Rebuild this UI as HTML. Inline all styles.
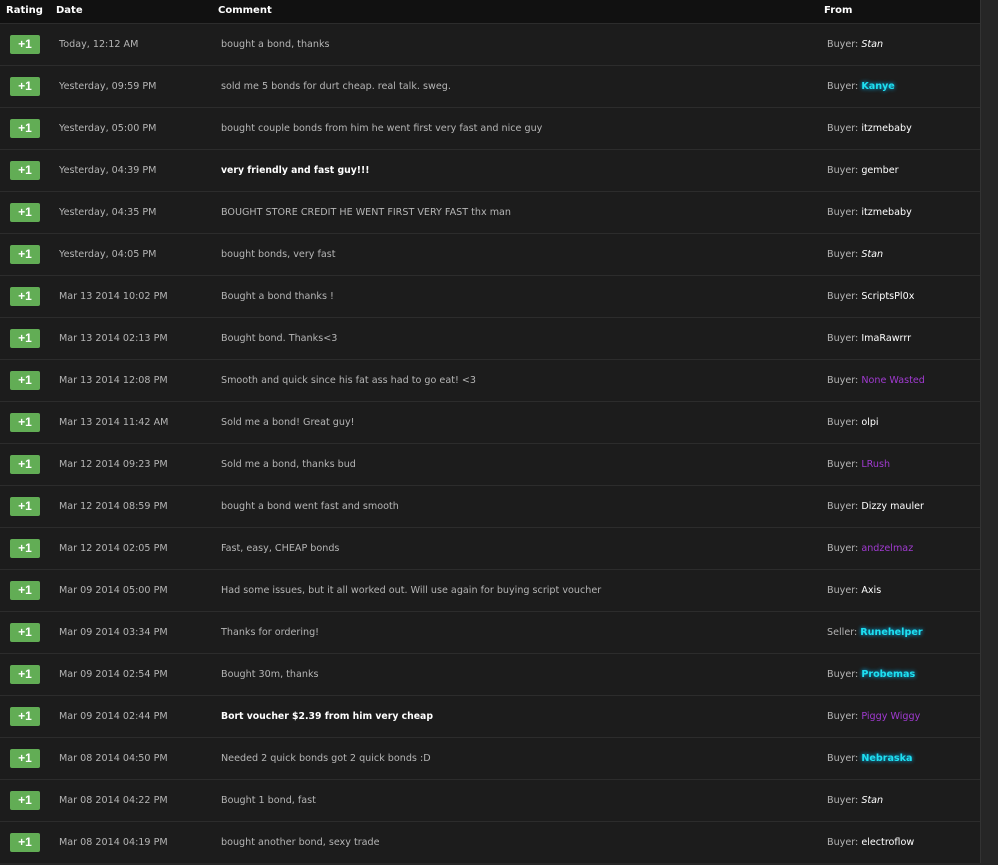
<!DOCTYPE html>
<html><head><style>
body{margin:0;width:998px;height:865px;background:#262626;overflow:hidden;font-family:"DejaVu Sans","Liberation Sans",sans-serif;font-size:9.6px;color:#b5b5b5}
.wrap{position:absolute;left:0;top:0;width:980px;height:863px;background:#1c1c1c;border-right:1px solid #333}
.hd{height:23px;background:#111;color:#fff;font-weight:bold;font-size:10px;position:relative}
.hd span{position:absolute;top:5px}
.row{height:41px;border-top:1px solid #2c2c2c;position:relative;background:#1c1c1c}
.row div{position:absolute;top:15px;white-space:nowrap}
.b{left:10px!important;top:11px!important;width:30px;height:19px;background:#62ad55;border-radius:2px;color:#fff;font-weight:bold;font-size:12px;text-align:center;line-height:19px;font-family:"Liberation Sans",sans-serif}
.d{left:59px}.c{left:221px}.f{left:827px}
.w{color:#fff}.wb{color:#fff;font-weight:bold;font-size:9.3px}
.st{color:#fff;font-style:italic}
.cy{color:#1ee0f0;font-weight:bold;text-shadow:0 0 4px #0bf}
.pu{color:#a03ad0}
</style></head><body><div class="wrap">
<div class="hd"><span style="left:6px">Rating</span><span style="left:56px">Date</span><span style="left:218px">Comment</span><span style="left:824px">From</span></div>
<div class="row"><div class="b">+1</div><div class="d">Today, 12:12 AM</div><div class="c">bought a bond, thanks</div><div class="f">Buyer: <span class="st">Stan</span></div></div>
<div class="row"><div class="b">+1</div><div class="d">Yesterday, 09:59 PM</div><div class="c">sold me 5 bonds for durt cheap. real talk. sweg.</div><div class="f">Buyer: <span class="cy">Kanye</span></div></div>
<div class="row"><div class="b">+1</div><div class="d">Yesterday, 05:00 PM</div><div class="c">bought couple bonds from him he went first very fast and nice guy</div><div class="f">Buyer: <span class="w">itzmebaby</span></div></div>
<div class="row"><div class="b">+1</div><div class="d">Yesterday, 04:39 PM</div><div class="c wb">very friendly and fast guy!!!</div><div class="f">Buyer: <span class="w">gember</span></div></div>
<div class="row"><div class="b">+1</div><div class="d">Yesterday, 04:35 PM</div><div class="c">BOUGHT STORE CREDIT HE WENT FIRST VERY FAST thx man</div><div class="f">Buyer: <span class="w">itzmebaby</span></div></div>
<div class="row"><div class="b">+1</div><div class="d">Yesterday, 04:05 PM</div><div class="c">bought bonds, very fast</div><div class="f">Buyer: <span class="st">Stan</span></div></div>
<div class="row"><div class="b">+1</div><div class="d">Mar 13 2014 10:02 PM</div><div class="c">Bought a bond thanks !</div><div class="f">Buyer: <span class="w">ScriptsPl0x</span></div></div>
<div class="row"><div class="b">+1</div><div class="d">Mar 13 2014 02:13 PM</div><div class="c">Bought bond. Thanks&lt;3</div><div class="f">Buyer: <span class="w">ImaRawrrr</span></div></div>
<div class="row"><div class="b">+1</div><div class="d">Mar 13 2014 12:08 PM</div><div class="c">Smooth and quick since his fat ass had to go eat! &lt;3</div><div class="f">Buyer: <span class="pu">None Wasted</span></div></div>
<div class="row"><div class="b">+1</div><div class="d">Mar 13 2014 11:42 AM</div><div class="c">Sold me a bond! Great guy!</div><div class="f">Buyer: <span class="w">olpi</span></div></div>
<div class="row"><div class="b">+1</div><div class="d">Mar 12 2014 09:23 PM</div><div class="c">Sold me a bond, thanks bud</div><div class="f">Buyer: <span class="pu">LRush</span></div></div>
<div class="row"><div class="b">+1</div><div class="d">Mar 12 2014 08:59 PM</div><div class="c">bought a bond went fast and smooth</div><div class="f">Buyer: <span class="w">Dizzy mauler</span></div></div>
<div class="row"><div class="b">+1</div><div class="d">Mar 12 2014 02:05 PM</div><div class="c">Fast, easy, CHEAP bonds</div><div class="f">Buyer: <span class="pu">andzelmaz</span></div></div>
<div class="row"><div class="b">+1</div><div class="d">Mar 09 2014 05:00 PM</div><div class="c">Had some issues, but it all worked out. Will use again for buying script voucher</div><div class="f">Buyer: <span class="w">Axis</span></div></div>
<div class="row"><div class="b">+1</div><div class="d">Mar 09 2014 03:34 PM</div><div class="c">Thanks for ordering!</div><div class="f">Seller: <span class="cy">Runehelper</span></div></div>
<div class="row"><div class="b">+1</div><div class="d">Mar 09 2014 02:54 PM</div><div class="c">Bought 30m, thanks</div><div class="f">Buyer: <span class="cy">Probemas</span></div></div>
<div class="row"><div class="b">+1</div><div class="d">Mar 09 2014 02:44 PM</div><div class="c wb">Bort voucher $2.39 from him very cheap</div><div class="f">Buyer: <span class="pu">Piggy Wiggy</span></div></div>
<div class="row"><div class="b">+1</div><div class="d">Mar 08 2014 04:50 PM</div><div class="c">Needed 2 quick bonds got 2 quick bonds :D</div><div class="f">Buyer: <span class="cy">Nebraska</span></div></div>
<div class="row"><div class="b">+1</div><div class="d">Mar 08 2014 04:22 PM</div><div class="c">Bought 1 bond, fast</div><div class="f">Buyer: <span class="st">Stan</span></div></div>
<div class="row"><div class="b">+1</div><div class="d">Mar 08 2014 04:19 PM</div><div class="c">bought another bond, sexy trade</div><div class="f">Buyer: <span class="w">electroflow</span></div></div>
</div></body></html>
